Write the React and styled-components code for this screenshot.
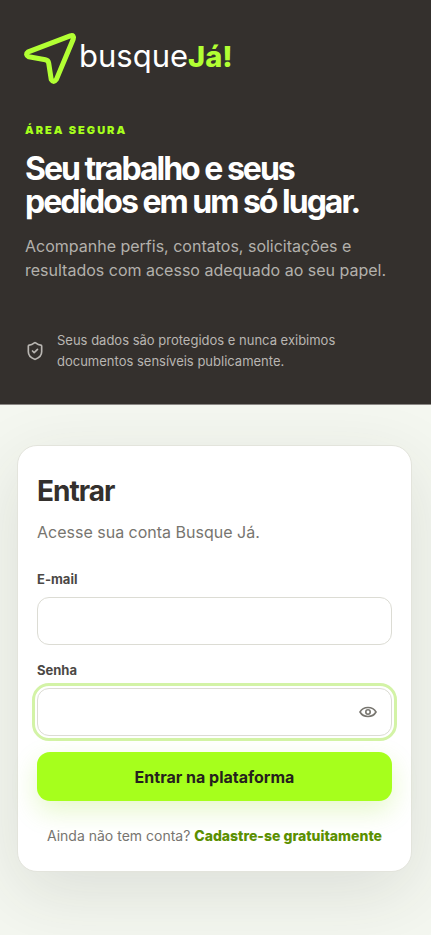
import React, { useState } from "react";
import styled, { createGlobalStyle } from "styled-components";
import { ShieldCheck } from "lucide-react";

const GlobalStyle = createGlobalStyle`
  * {
    box-sizing: border-box;
  }

  body {
    margin: 0;
    background: #f4f7f0;
    color: #34302d;
    font-family: Inter, "Liberation Sans", sans-serif;
    font-size: 16px;
  }

  h1, h2, p {
    margin: 0;
  }
`;

const Page = styled.div`
  display: flex;
  flex-direction: column;
  min-height: 100vh;
`;

const Hero = styled.header`
  display: flex;
  flex-direction: column;
  align-items: flex-start;
  padding: 32px 25px;
  border-bottom: 1px solid #8a8784;
  background: #34302d;
  color: #fff;
`;

const Logo = styled.a`
  display: flex;
  align-items: flex-start;
  gap: 2px;
  margin-bottom: 36px;
  color: #fff;
  text-decoration: none;
`;

const Wordmark = styled.span`
  font-size: 31px;
  line-height: 48px;

  strong {
    color: #b2ff33;
    font-size: 29px;
    font-weight: 800;
  }
`;

const Eyebrow = styled.p`
  margin-bottom: 12px;
  color: #a6ff1c;
  font-size: 11px;
  font-weight: 900;
  line-height: 20px;
  letter-spacing: 2px;
  text-transform: uppercase;
`;

const Headline = styled.h1`
  max-width: 360px;
  margin-bottom: 16px;
  font-size: 32px;
  font-weight: 700;
  line-height: 33px;
  letter-spacing: -2px;
`;

const Lead = styled.p`
  color: #b3b0ac;
  font-size: 16px;
  line-height: 24px;
`;

const Notice = styled.div`
  display: flex;
  align-items: center;
  gap: 12px;
  margin-top: 48px;
  color: #b9b6b2;
  font-size: 13px;
  line-height: 21px;

  svg {
    flex-shrink: 0;
  }

  p {
    max-width: 300px;
  }
`;

const Main = styled.main`
  flex: 1;
  padding: 40px 19px 64px 17px;
  overflow: hidden;
`;

const Card = styled.section`
  padding: 28px 19px 24px;
  border: 1px solid #e3e4dc;
  border-radius: 20px;
  background: #fff;
  box-shadow: 0 20px 70px rgba(52, 48, 45, 0.12);
`;

const CardTitle = styled.h2`
  margin-bottom: 12px;
  font-size: 28px;
  font-weight: 700;
  line-height: 34px;
  letter-spacing: -1px;
`;

const CardText = styled.p`
  color: #77756f;
  font-size: 16px;
  line-height: 24px;
`;

const Form = styled.form`
  display: flex;
  flex-direction: column;
  gap: 16px;
  margin-top: 26px;
`;

const Field = styled.div`
  display: flex;
  flex-direction: column;
  gap: 8px;
`;

const Label = styled.label`
  color: #4b4845;
  font-size: 13px;
  font-weight: 700;
  line-height: 19px;
`;

const InputBox = styled.div`
  display: flex;
  align-items: center;
  height: 48px;
  border: 1px solid #dcdcd4;
  border-radius: 12px;
  background: #fff;
  outline: ${(props) => (props.$active ? "3px solid #d3f3a6" : "none")};
  outline-offset: 2px;
`;

const Input = styled.input`
  flex: 1;
  min-width: 0;
  height: 100%;
  padding: 0 14px;
  border: 0;
  border-radius: 12px;
  outline: none;
  background: transparent;
  color: inherit;
  font: inherit;
`;

const IconButton = styled.button`
  display: flex;
  padding: 8px;
  margin-right: 6px;
  border: 0;
  background: none;
  color: #77756f;
  cursor: pointer;
`;

const SubmitButton = styled.button`
  height: 49px;
  border: 0;
  border-radius: 13px;
  background: #a6ff1c;
  box-shadow: 0 10px 26px rgba(140, 225, 20, 0.22);
  color: #25211e;
  font: inherit;
  font-weight: 700;
  cursor: pointer;
`;

const SignUp = styled.p`
  margin-top: 24px;
  color: #77756f;
  font-size: 14px;
  line-height: 22px;
  text-align: center;

  a {
    color: #5b8f00;
    font-weight: 800;
    text-decoration: none;
  }
`;

const LogoMark = () => (
  <svg
    width="52"
    height="52"
    viewBox="0 0 52 52"
    fill="none"
    overflow="visible"
    aria-hidden="true"
  >
    <path
      d="M3.2 19.9 45.2 3.8Q49.6 2.6 48.2 7.2L31.4 47.4Q28.6 51.4 26.2 47.4L23.7 31.2Q23.3 28.4 20.4 27.8L3.8 24.8Q-.4 22.4 3.2 19.9Z"
      stroke="#b2ff33"
      strokeWidth="5"
      strokeLinejoin="round"
    />
  </svg>
);

const EyeIcon = () => (
  <svg
    width="18"
    height="18"
    viewBox="0 0 18 18"
    fill="none"
    stroke="currentColor"
    strokeWidth="1.6"
    aria-hidden="true"
  >
    <path d="M1 9C2.8 5.8 5.6 4.5 9 4.5S15.2 5.8 17 9C15.2 12.2 12.4 13.5 9 13.5S2.8 12.2 1 9Z" />
    <circle cx="9" cy="9" r="2.2" />
  </svg>
);

const App = () => {
  const [showPassword, setShowPassword] = useState(false);
  const [active, setActive] = useState("password");

  return (
    <Page>
      <GlobalStyle />
      <Hero>
        <Logo href="#" aria-label="busqueJá!">
          <LogoMark />
          <Wordmark>
            busque<strong>Já!</strong>
          </Wordmark>
        </Logo>
        <Eyebrow>Área segura</Eyebrow>
        <Headline>Seu trabalho e seus pedidos em um só lugar.</Headline>
        <Lead>
          Acompanhe perfis, contatos, solicitações e resultados com acesso
          adequado ao seu papel.
        </Lead>
        <Notice>
          <ShieldCheck size={20} />
          <p>
            Seus dados são protegidos e nunca exibimos documentos sensíveis
            publicamente.
          </p>
        </Notice>
      </Hero>
      <Main>
        <Card>
          <CardTitle>Entrar</CardTitle>
          <CardText>Acesse sua conta Busque Já.</CardText>
          <Form onSubmit={(e) => e.preventDefault()}>
            <Field>
              <Label htmlFor="email">E-mail</Label>
              <InputBox $active={active === "email"}>
                <Input
                  id="email"
                  type="email"
                  onFocus={() => setActive("email")}
                />
              </InputBox>
            </Field>
            <Field>
              <Label htmlFor="password">Senha</Label>
              <InputBox $active={active === "password"}>
                <Input
                  id="password"
                  type={showPassword ? "text" : "password"}
                  onFocus={() => setActive("password")}
                />
                <IconButton
                  type="button"
                  aria-label="Mostrar senha"
                  onClick={() => setShowPassword(!showPassword)}
                >
                  <EyeIcon />
                </IconButton>
              </InputBox>
            </Field>
            <SubmitButton type="submit">Entrar na plataforma</SubmitButton>
          </Form>
          <SignUp>
            Ainda não tem conta? <a href="#">Cadastre-se gratuitamente</a>
          </SignUp>
        </Card>
      </Main>
    </Page>
  );
};

export default App;
